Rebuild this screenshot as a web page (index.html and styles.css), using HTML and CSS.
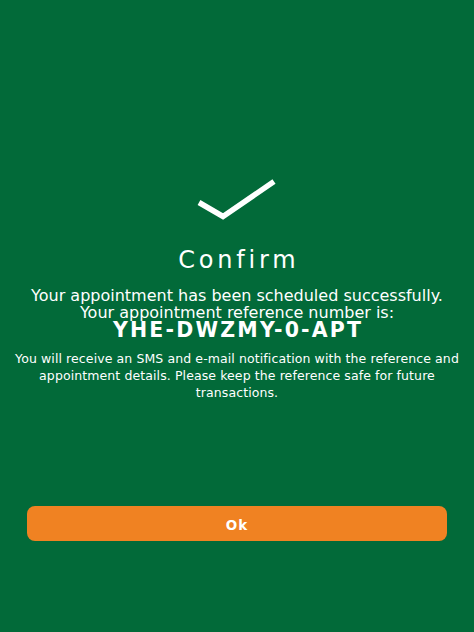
FILE: index.html
```html
<!DOCTYPE html>
<html lang="en">

<head>
    <meta charset="UTF-8">
    <meta name="viewport" content="width=device-width, initial-scale=1.0">
    <title>Confirm</title>
    <link rel="stylesheet" href="styles.css">
</head>

<body>
    <div class="screen">
        <div class="tick">
            <svg width="80" height="44" viewBox="0 0 80 44">
                <polyline points="2,24.5 26,38.5 77,3.5" fill="none" stroke="#ffffff" stroke-width="5.5"/>
            </svg>
        </div>
        <h1 class="title">Confirm</h1>
        <p class="msg">Your appointment has been scheduled successfully.<br>Your appointment reference number is:</p>
        <div class="ref">YHE-DWZMY-0-APT</div>
        <p class="note">You will receive an SMS and e-mail notification with the reference and appointment details. Please keep the reference safe for future transactions.</p>
        <div class="actions">
            <button class="ok">Ok</button>
        </div>
    </div>
</body>

</html>
```

FILE: styles.css
```css
html, body
{
    margin: 0;
    height: 100%;
}

body
{
    background-color: #026a39;
    font-family: "DejaVu Sans", Verdana, sans-serif;
    color: #ffffff;
}

.screen
{
    display: flex;
    flex-direction: column;
    align-items: center;
    padding-top: 178px;
    text-align: center;
}

.tick
{
    height: 42px;
    display: flex;
    justify-content: center;
}

.title
{
    margin: 24px 0 0;
    padding-left: 3.8px;
    font-size: 24px;
    font-weight: 400;
    line-height: 32px;
    letter-spacing: 3.8px;
}

.msg
{
    margin: 11px 0 0;
    font-size: 16px;
    line-height: 17px;
}

.ref
{
    margin-top: 1px;
    padding-left: 2.2px;
    font-weight: bold;
    font-size: 20.5px;
    line-height: 17px;
    letter-spacing: 2.2px;
}

.note
{
    margin: 11px 6px 0;
    font-size: 12.5px;
    line-height: 17px;
    letter-spacing: 0.1px;
}

.actions
{
    align-self: stretch;
    padding: 105px 27px 0;
}

.ok
{
    width: 100%;
    height: 35px;
    padding-top: 3px;
    border: none;
    border-radius: 8px;
    background-color: #f08222;
    color: #ffffff;
    font-family: "DejaVu Sans", Verdana, sans-serif;
    font-weight: bold;
    font-size: 13.5px;
    letter-spacing: 1px;
}
```
